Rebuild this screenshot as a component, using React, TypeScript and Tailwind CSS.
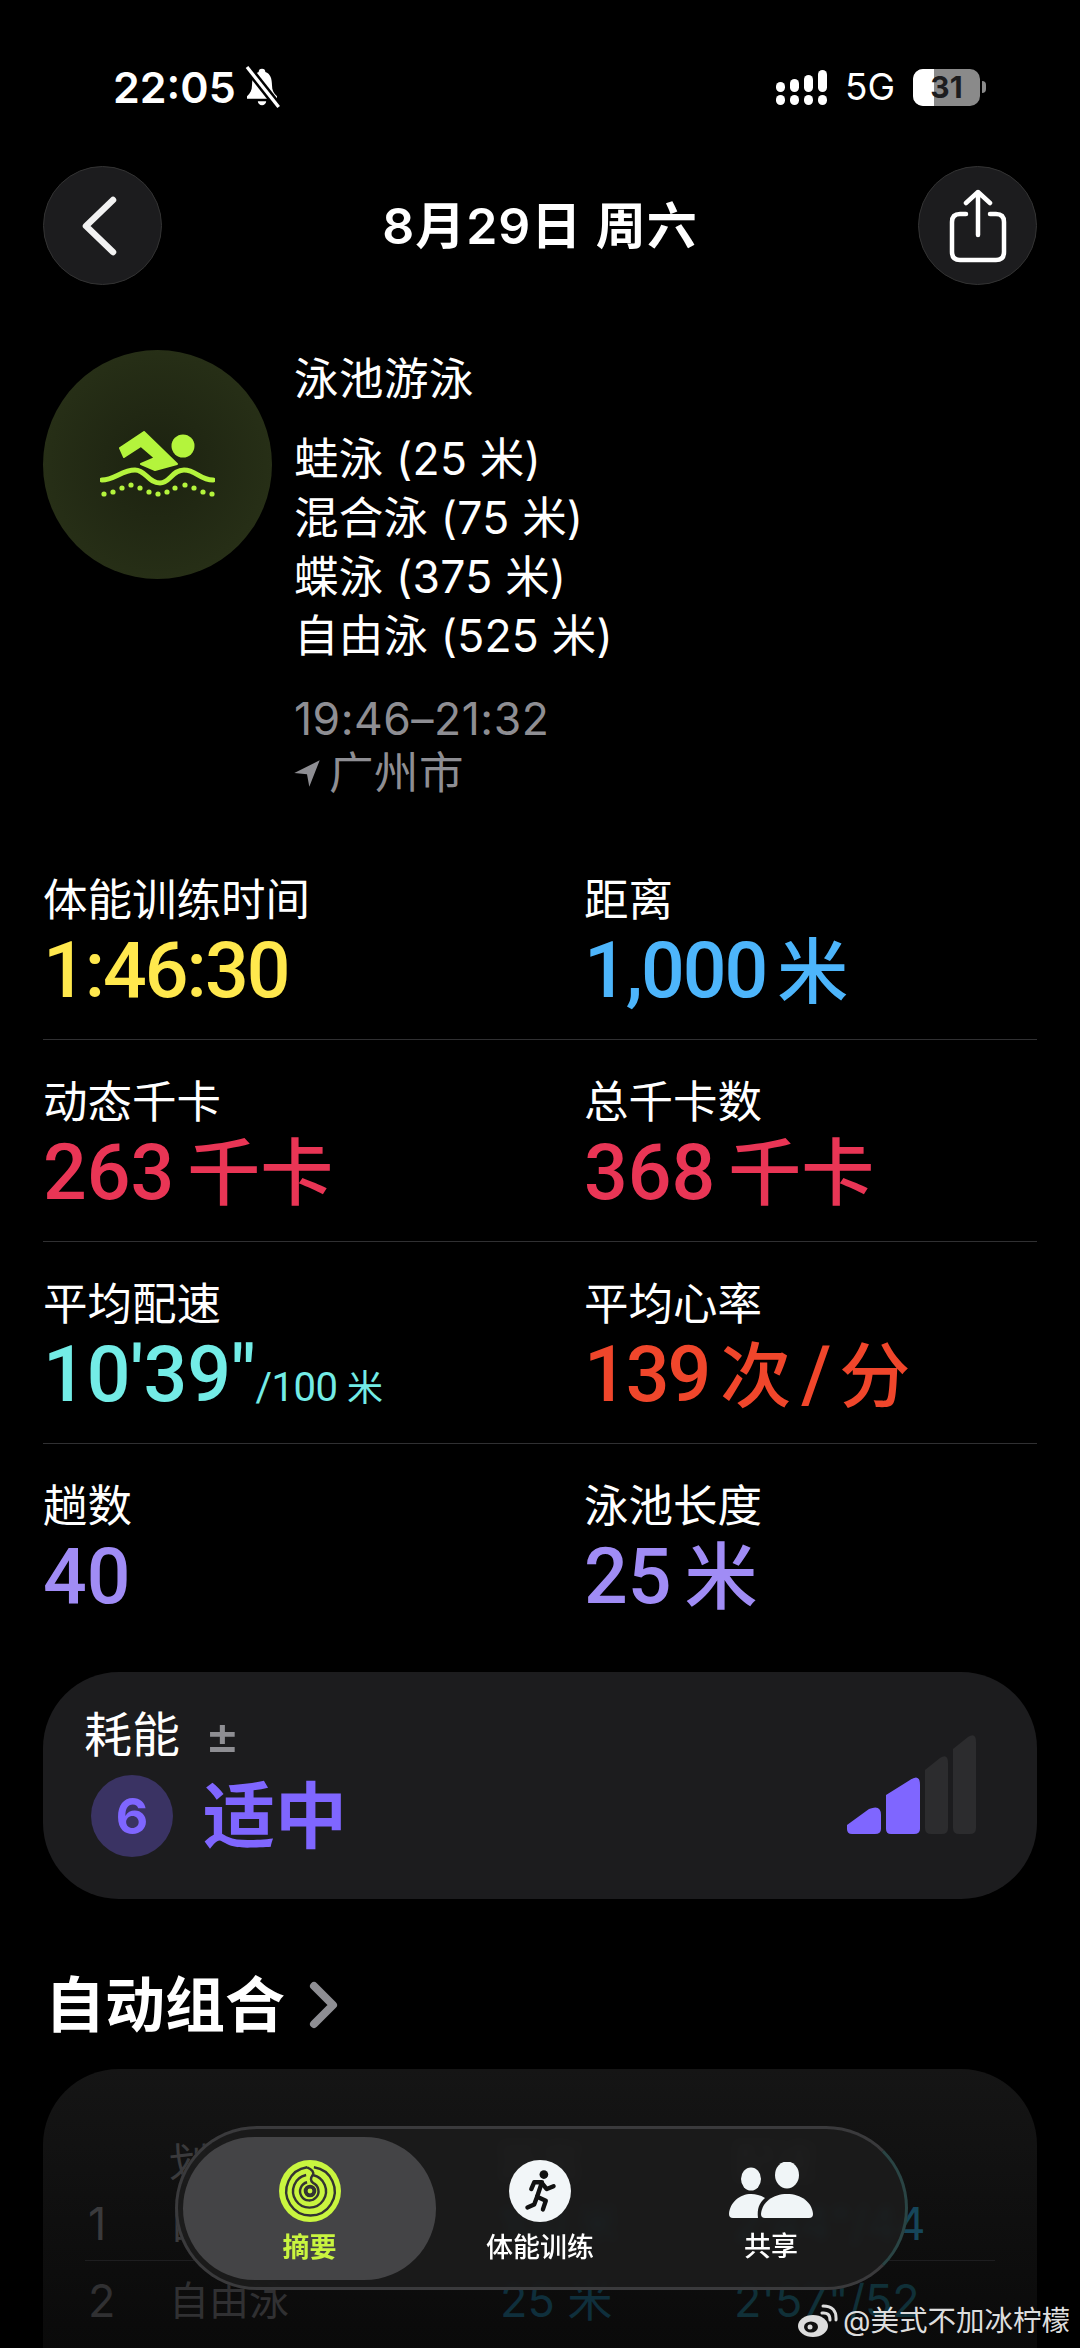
const font = "font-['Inter','Noto_Sans_CJK_SC',sans-serif]";

const strokes = ["蛙泳 (25 米)", "混合泳 (75 米)", "蝶泳 (375 米)", "自由泳 (525 米)"];

const dots = [
  [4, 63], [13, 61], [22, 57], [31, 54], [40, 57], [49, 61], [58, 63],
  [67, 61], [75, 57], [85, 54], [94, 57], [103, 61], [112, 63],
];

const SwimIcon = () => (
  <svg width="115" height="67" viewBox="0 0 115 67" fill="#b4f43c">
    <circle cx="83" cy="15" r="11.5" />
    <path d="M44 1 L20 17 L24 26 L41 15 L55 27 L41 33 L55 39 L77 33 Z" stroke="#b4f43c" strokeWidth="2" strokeLinejoin="round" />
    <path d="M2 49 C14 49 22 39 35 39 C46 39 48 52 60 52 C70 52 72 39 84 39 C96 39 100 49 113 49" fill="none" stroke="#b4f43c" strokeWidth="5" strokeLinecap="round" />
    {dots.map(([x, y]) => (
      <circle key={x} cx={x} cy={y} r="2.6" />
    ))}
  </svg>
);

const BellOff = () => (
  <svg width="40" height="44" viewBox="0 0 24 26" fill="white">
    <path d="M12 2a2 2 0 0 1 2 2c3 1 4 4 4 8 0 3 1 5 3 6.500V20H3v-1.500C5 17 6 15 6 12c0-4 1-7 4-8a2 2 0 0 1 2-2z" />
    <path d="M9.500 21.500h5a2.500 2.500 0 0 1-5 0z" />
    <path d="M3 1 L22 25" stroke="black" strokeWidth="5" />
    <path d="M3 1 L22 25" stroke="white" strokeWidth="2" />
  </svg>
);

const Signal = () => (
  <div className="flex items-end gap-[5px]">
    {[10, 13, 17, 22].map((h) => (
      <div key={h} className="flex flex-col gap-[3px]">
        <div className="w-[9px] rounded-full bg-white" style={{ height: h }} />
        <div className="h-[10px] w-[9px] rounded-full bg-white" />
      </div>
    ))}
  </div>
);

const Stat = ({ label, children }: { label: string; children: React.ReactNode }) => (
  <div className="w-[541px] flex-none">
    <div className="text-[44.500px] leading-[52px] text-white">{label}</div>
    <div className="mt-[2px] flex items-baseline whitespace-pre font-['Roboto','Noto_Sans_CJK_SC',sans-serif] text-[77px] leading-[86px] font-medium tracking-[-2px]">
      {children}
    </div>
  </div>
);

const Cjk = ({ children }: { children: React.ReactNode }) => (
  <span className="ml-[11px] text-[71px] font-medium tracking-normal">{children}</span>
);

const Kcal = () => <span className="ml-[13px] text-[73px] font-medium tracking-normal">千卡</span>;

const Row = ({ children, border = true }: { children: React.ReactNode; border?: boolean }) => (
  <div className={`flex h-[202px] items-start pt-[36px] ${border ? "border-b border-[#303032]" : ""}`}>{children}</div>
);

const App = () => {
  return (
    <div className={`relative h-[2348px] w-[1080px] overflow-hidden bg-black text-white ${font}`}>
      {/* status bar */}
      <div className="flex h-[166px] items-start justify-between pt-[62px] pr-[94px] pl-[113px]">
        <div className="flex items-center gap-[6px]">
          <span className="text-[43px] leading-[50px] font-semibold">22:05</span>
          <BellOff />
        </div>
        <div className="flex items-center">
          <Signal />
          <span className="mr-[18px] ml-[18px] text-[37px] leading-[50px] font-normal">5G</span>
          <div className="flex items-center gap-[2px]">
            <div className="relative flex h-[37px] w-[67px] items-center justify-center overflow-hidden rounded-[10px] bg-[#8a8a8a]">
              <div className="absolute inset-y-0 left-0 w-[21px] bg-white" />
              <span className="relative text-[30px] leading-none font-bold text-[#1c1c1e]">31</span>
            </div>
            <div className="h-[12px] w-[4px] rounded-r-full bg-[#8a8a8a]" />
          </div>
        </div>
      </div>

      {/* nav */}
      <div className="flex items-center justify-between px-[43px]">
        <div className="flex h-[119px] w-[119px] items-center justify-center rounded-full border border-[#333] bg-[#1c1c1e]">
          <svg width="36" height="60" viewBox="0 0 36 60" fill="none" stroke="#f2f2f2" strokeWidth="6.500" strokeLinecap="round" strokeLinejoin="round" className="mr-[8px]">
            <path d="M32 4 L5 30 L32 56" />
          </svg>
        </div>
        <div className="text-[50px] leading-[60px] font-semibold tracking-[1px]">8月29日 周六</div>
        <div className="flex h-[119px] w-[119px] items-center justify-center rounded-full border border-[#333] bg-[#1c1c1e]">
          <svg width="58" height="74" viewBox="0 0 58 74" fill="none" stroke="white" strokeWidth="4.500" strokeLinecap="round" strokeLinejoin="round">
            <path d="M29 46 V3 M17 14 L29 3 L41 14" />
            <path d="M17 25 H11 Q3 25 3 33 V63 Q3 71 11 71 H47 Q55 71 55 63 V33 Q55 25 47 25 H41" />
          </svg>
        </div>
      </div>

      {/* workout header */}
      <div className="mt-[65px] flex px-[43px]">
        <div className="flex h-[229px] w-[229px] flex-none items-center justify-center rounded-full bg-[radial-gradient(circle,#1c2210_0%,#2b3419_100%)]">
          <SwimIcon />
        </div>
        <div className="ml-[22px] text-[44.500px]">
          <div className="mt-[2px] leading-[54px] tracking-[0.5px]">泳池游泳</div>
          <div className="mt-[24px]">
            {strokes.map((s) => (
              <div key={s} className="leading-[59px] tracking-[0.2px]">
                {s}
              </div>
            ))}
          </div>
          <div className="mt-[26px] leading-[54px] tracking-[0.5px] text-[#8e8e93]">19:46–21:32</div>
          <div className="flex items-center leading-[54px] tracking-[0.5px] text-[#8e8e93]">
            <svg width="30" height="30" viewBox="0 0 26 26" fill="#8e8e93" className="mr-[7px] -ml-[2px]">
              <path d="M24 2 L2 13 L13 14 L15 25 Z" />
            </svg>
            广州市
          </div>
        </div>
      </div>

      {/* stats */}
      <div className="mx-[43px] mt-[38px]">
        <Row>
          <Stat label="体能训练时间"><span className="text-[#ffe84d]">1:46:30</span></Stat>
          <Stat label="距离"><span className="text-[#4db5fb]">1,000<Cjk>米</Cjk></span></Stat>
        </Row>
        <Row>
          <Stat label="动态千卡"><span className="tracking-normal text-[#e93555]">263<Kcal /></span></Stat>
          <Stat label="总千卡数"><span className="tracking-normal text-[#e93555]">368<Kcal /></span></Stat>
        </Row>
        <Row>
          <Stat label="平均配速">
            <span className="tracking-normal text-[#73ece6]">10'39"</span>
            <span className="text-[40px] font-normal tracking-[-0.500px] text-[#73ece6]">/100 <span className="text-[36px] tracking-normal">米</span></span>
          </Stat>
          <Stat label="平均心率">
            <span className="text-[#f0462b]">139<Cjk>次</Cjk><span className="mx-[10px]">/</span><span className="text-[71px] font-medium tracking-normal">分</span></span>
          </Stat>
        </Row>
        <Row border={false}>
          <Stat label="趟数"><span className="tracking-normal text-[#a08cf5]">40</span></Stat>
          <Stat label="泳池长度"><span className="tracking-normal text-[#a08cf5]">25<Kcal2 /></span></Stat>
        </Row>
      </div>

      {/* effort */}
      <div className="mx-[43px] mt-[26px] flex h-[227px] justify-between rounded-[76px] bg-[#1c1c1e] pt-[33px] pr-[61px] pl-[41px]">
        <div>
          <div className="flex items-center">
            <span className="text-[48px] leading-[60px]">耗能</span>
            <span className="ml-[25px] text-[52px] leading-[60px] font-medium text-[#8e8e93]">±</span>
          </div>
          <div className="mt-[10px] ml-[7px] flex items-center">
            <div className="flex h-[82px] w-[82px] items-center justify-center rounded-full bg-[#3a3363] text-[50px] font-bold text-[#7f66ff]">6</div>
            <div className="ml-[30px] text-[72px] leading-[82px] font-semibold text-[#7f66ff]">适中</div>
          </div>
        </div>
        <div className="mb-[65px] flex items-end gap-[5px] self-end">
          <svg width="34" height="27" viewBox="0 0 34 27" fill="#7f66ff"><path d="M0 18 L22 2 Q34 -3 34 8 V22 Q34 27 28 27 H5 Q0 27 0 22 Z" /></svg>
          <svg width="34" height="57" viewBox="0 0 34 57" fill="#7f66ff"><path d="M0 18 L24 3 Q34 -4 34 8 V52 Q34 57 28 57 H5 Q0 57 0 52 Z" /></svg>
          <svg width="23" height="78" viewBox="0 0 23 78" fill="#2c2c2e"><path d="M0 14 L15 2 Q23 -3 23 7 V72 Q23 78 17 78 H6 Q0 78 0 72 Z" /></svg>
          <svg width="23" height="99" viewBox="0 0 23 99" fill="#2c2c2e"><path d="M0 14 L15 2 Q23 -3 23 7 V93 Q23 99 17 99 H6 Q0 99 0 93 Z" /></svg>
        </div>
      </div>

      {/* auto sets */}
      <div className="mt-[70px] flex items-center pl-[45px]">
        <span className="text-[60px] leading-[72px] font-bold">自动组合</span>
        <svg width="30" height="48" viewBox="0 0 30 48" fill="none" stroke="#8e8e93" strokeWidth="8" strokeLinecap="round" strokeLinejoin="round" className="ml-[24px]">
          <path d="M5 5 L24 24 L5 43" />
        </svg>
      </div>
      <div className="mx-[43px] mt-[28px] h-[281px] rounded-t-[76px] bg-gradient-to-b from-[#151515] to-[#0a0a0a] pt-[69px]">
        <div className="grid grid-cols-[126px_331px_234px_1fr] text-[40px] leading-[50px] text-[#3a3a3c]">
          <div />
          <div>划水</div>
          <div>距离</div>
          <div>配速</div>
        </div>
        <div className="mx-[42px] mt-[11px] grid grid-cols-[84px_331px_234px_1fr] border-b border-[#1e1e20] pb-[11px] text-[40px] leading-[50px] text-[#3a3a3c]">
          <div className="pl-[3px] text-[45px]">1</div>
          <div>自由泳</div>
          <div className="text-[#16465a]">100 米</div>
          <div className="text-[45px] text-[#16465a]">2'44"/44</div>
        </div>
        <div className="mx-[42px] mt-[15px] grid grid-cols-[84px_331px_234px_1fr] text-[40px] leading-[50px] text-[#303032]">
          <div className="pl-[3px] text-[45px]">2</div>
          <div>自由泳</div>
          <div className="text-[45px] text-[#0f2f3c]">25 米</div>
          <div className="text-[45px] text-[#103038]">2'57"/52</div>
        </div>
      </div>

      {/* tab bar */}
      <div className="absolute top-[2126px] left-[175px] flex h-[164px] w-[733px] rounded-full border-[3px] border-[#3a3a3c] border-r-[#2a4444] bg-[#1c1c1c]/90 pt-[8px] pl-[5px] backdrop-blur-[4px]">
        <div className="flex h-[143px] w-[253px] flex-none flex-col items-center rounded-full bg-[#444446] pt-[23px]">
          <svg width="62" height="62" viewBox="0 0 64 64" fill="none" stroke="#333" strokeWidth="2.500">
            <circle cx="32" cy="32" r="32" fill="#c9f53f" stroke="none" />
            <path d="M36 7.500 A25 25 0 1 1 29 7.500" />
            <path d="M29 7.500 Q37 11 35 15.500 A17 17 0 1 1 28 15.500" />
            <path d="M35 15.500 Q31 20 35 23.500 A9.500 9.500 0 1 1 29 23" />
            <circle cx="32" cy="32" r="4.500" strokeWidth="4" />
          </svg>
          <span className="mt-[10px] text-[27px] leading-[32px] font-semibold text-[#c9f53f]">摘要</span>
        </div>
        <div className="flex w-[208px] flex-none flex-col items-center pt-[23px]">
          <div className="flex h-[62px] w-[62px] items-center justify-center rounded-full bg-[#f2f6f8]">
            <svg width="62" height="62" viewBox="0 0 64 64" fill="none" stroke="#111" strokeWidth="4.500" strokeLinecap="round" strokeLinejoin="round">
              <circle cx="36" cy="15" r="4.500" fill="#111" stroke="none" />
              <path d="M23 30 L26 23 L34 23 L29 38 L38 42 L35 51" />
              <path d="M34 24 L39 30 L46 27" />
              <path d="M29 38 L26 46 L19 49" />
            </svg>
          </div>
          <span className="mt-[10px] text-[27px] leading-[32px] font-medium">体能训练</span>
        </div>
        <div className="flex w-[254px] flex-none flex-col items-center pt-[25px]">
          <svg width="84" height="56" viewBox="0 0 84 56" fill="#f0f5f7">
            <ellipse cx="22" cy="17" rx="10" ry="11.500" />
            <ellipse cx="58" cy="13" rx="12" ry="13.500" />
            <path d="M0 52 C1 40 11 32 22 32 C27 32 31 33 36 36 C30 41 28 47 29 56 H4 Q0 56 0 52 Z" />
            <path d="M32 52 C33 40 44 32 58 32 C72 32 83 40 84 52 Q84 56 80 56 H36 Q32 56 32 52 Z" />
          </svg>
          <span className="mt-[13px] text-[27px] leading-[32px] font-medium">共享</span>
        </div>
      </div>

      {/* watermark */}
      <div className="absolute top-[2303px] left-[798px] flex items-center text-[28.500px] leading-[36px] text-[#dddddd]">
        <svg width="40" height="34" viewBox="0 0 40 34" fill="none" className="mr-[5px]">
          <ellipse cx="15" cy="22" rx="15" ry="11" fill="#dddddd" />
          <ellipse cx="13" cy="23" rx="7" ry="5.500" fill="#111" />
          <circle cx="12" cy="23" r="2.500" fill="#dddddd" />
          <path d="M24 9 Q32 8 32 16 M25 2 Q39 2 38 16" stroke="#dddddd" strokeWidth="3" strokeLinecap="round" />
        </svg>
        @美式不加冰柠檬
      </div>
    </div>
  );
};

const Kcal2 = () => <span className="ml-[13px] text-[73px] font-medium tracking-normal">米</span>;

export default App;
